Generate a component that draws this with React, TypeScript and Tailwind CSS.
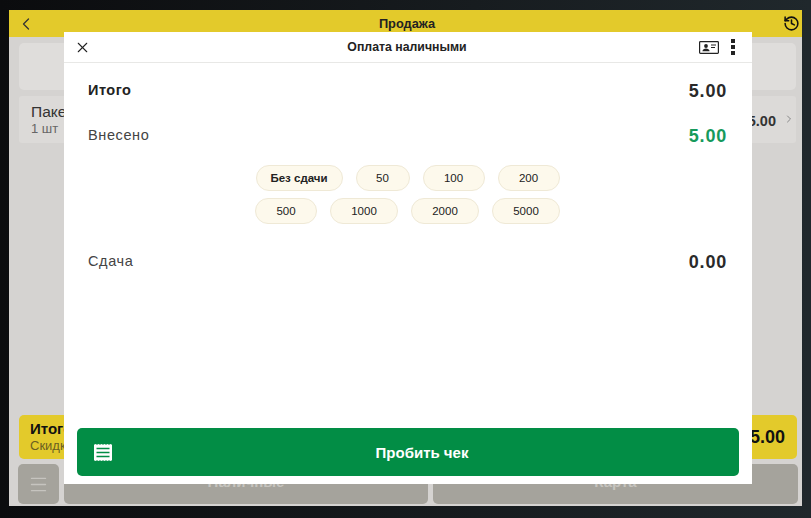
import { ChevronLeft, ChevronRight, History, Menu, X } from "lucide-react";

const row1 = [
  { label: "Без сдачи", w: "w-[87px]", bold: true },
  { label: "50", w: "w-[54px]" },
  { label: "100", w: "w-[62px]" },
  { label: "200", w: "w-[62px]" },
];
const row2 = [
  { label: "500", w: "w-[62px]" },
  { label: "1000", w: "w-[68px]" },
  { label: "2000", w: "w-[68px]" },
  { label: "5000", w: "w-[68px]" },
];

const Chip = ({ label, w, bold }: { label: string; w: string; bold?: boolean }) => (
  <button
    className={`${w} h-[26px] pt-[1px] rounded-full border border-[#efe9d6] bg-[#fdf9ec] text-[11.5px] text-[#222] ${bold ? "font-bold" : ""}`}
  >
    {label}
  </button>
);

const App = () => {
  return (
    <div className="w-[811px] h-[518px] overflow-hidden bg-gradient-to-r from-[#0b0c0e] to-[#20282c] pl-[9px] pr-[9px] pt-[10px] font-['Liberation_Sans',sans-serif]">
      {/* Screen behind the dialog */}
      <div className="relative h-[496px] w-[793px] bg-[#d5d3d1] flex flex-col">
        <div className="h-[27px] shrink-0 bg-[#e3ca2b] flex items-center justify-between pl-[7px] pr-[2px]">
          <ChevronLeft className="w-[20px] h-[20px] text-[#333]" strokeWidth={1.5} />
          <span className="text-[12.8px] font-bold text-[#222] mr-[5px]">Продажа</span>
          <History className="w-[17px] h-[17px] text-[#111]" strokeWidth={2.2} />
        </div>

        <div className="flex-1 flex flex-col pl-[10px] pr-[6px] pt-[6px]">
          <div className="h-[47px] rounded-[5px] bg-[#dfdddb]" />
          <div className="mt-[6px] h-[47px] rounded-[3px] bg-[#dcdad8] flex items-center justify-between pl-[12px] pr-[1px]">
            <div>
              <div className="text-[15.5px] leading-[18px] text-[#333]">Пакет</div>
              <div className="text-[13px] leading-[16px] text-[#666]">1 шт</div>
            </div>
            <div className="flex items-center gap-[7px]">
              <span className="text-[14.5px] font-bold text-[#333] mt-[5px]">5.00</span>
              <ChevronRight className="w-[12px] h-[12px] text-[#888] -mt-[2px]" />
            </div>
          </div>

          <div className="mt-auto h-[44px] w-[778px] rounded-[5px] bg-[#e3ca2b] flex items-center justify-between pl-[11px] pr-[12px]">
            <div>
              <div className="text-[15px] leading-[18px] font-bold text-[#111]">Итого</div>
              <div className="text-[13px] leading-[16px] text-[#6b5f22]">Скидка</div>
            </div>
            <span className="text-[18px] font-bold text-[#111]">5.00</span>
          </div>

          <div className="mt-[5px] mb-[2px] -ml-[1px] h-[40px] w-[781px] shrink-0 flex gap-[5px] text-[15px] font-bold text-[#c6c4bf]">
            <div className="w-[41px] shrink-0 rounded-[5px] bg-[#a5a39c] flex items-center justify-center">
              <Menu className="w-[21px] h-[21px] text-[#c6c4bf]" strokeWidth={1.5} />
            </div>
            <div className="w-[364px] shrink-0 rounded-[5px] bg-[#a5a39c] flex items-end justify-center pb-[11px]">Наличные</div>
            <div className="w-[365px] shrink-0 rounded-[5px] bg-[#a5a39c] flex items-end justify-center pb-[11px]">Карта</div>
          </div>
        </div>

        {/* Cash payment dialog */}
        <div className="absolute left-[55px] top-[22px] w-[688px] h-[452px] bg-white flex flex-col">
          <div className="h-[31px] shrink-0 border-b border-[#e8e8e6] flex items-center justify-between pl-[10px] pr-[17px]">
            <X className="w-[17px] h-[17px] text-[#222]" strokeWidth={1.5} />
            <span className="text-[12.3px] font-bold text-[#222] ml-[24px]">Оплата наличными</span>
            <div className="flex items-center gap-[12px]">
              <svg width="20" height="13" viewBox="0 0 20 13" fill="none" className="text-[#222]">
                <rect x="0.6" y="0.6" width="18.8" height="11.8" rx="0.8" stroke="currentColor" strokeWidth="1.2" />
                <circle cx="7" cy="5" r="1.9" fill="currentColor" />
                <path d="M3.4 10.2c.3-2 1.8-2.8 3.6-2.8s3.3.8 3.6 2.8z" fill="currentColor" />
                <path d="M12 4h5M12 6.5h4" stroke="currentColor" strokeWidth="1" />
              </svg>
              <div className="flex flex-col gap-[2px]">
                <span className="w-[4px] h-[4px] bg-[#222]" />
                <span className="w-[4px] h-[4px] bg-[#222]" />
                <span className="w-[4px] h-[4px] bg-[#222]" />
              </div>
            </div>
          </div>

          <div className="flex-1 flex flex-col pl-[24px] pr-[25px] pt-[16px]">
            <div className="h-[24px] flex items-center justify-between">
              <span className="text-[14.5px] tracking-[0.5px] font-bold text-[#222]">Итого</span>
              <span className="text-[18px] tracking-[0.8px] font-bold text-[#2a2a2a]">5.00</span>
            </div>
            <div className="mt-[21px] h-[24px] flex items-center justify-between">
              <span className="text-[14.5px] tracking-[0.6px] text-[#444]">Внесено</span>
              <span className="text-[18px] tracking-[0.8px] font-bold text-[#169a5c]">5.00</span>
            </div>

            <div className="mt-[17px] flex flex-col items-center gap-[7px]">
              <div className="flex gap-[13px]">
                {row1.map((c) => (
                  <Chip key={c.label} {...c} />
                ))}
              </div>
              <div className="flex gap-[13px]">
                {row2.map((c) => (
                  <Chip key={c.label} {...c} />
                ))}
              </div>
            </div>

            <div className="mt-[26px] h-[24px] flex items-center justify-between">
              <span className="text-[14.5px] tracking-[0.6px] text-[#444]">Сдача</span>
              <span className="text-[18px] tracking-[0.8px] font-bold text-[#2a2a2a]">0.00</span>
            </div>
          </div>

          <div className="px-[13px] pb-[8px]">
            <button className="relative w-full h-[48px] rounded-[5px] bg-[#028d45] flex items-center justify-center pl-[28px] pt-[2px] text-[15px] font-bold text-white">
              <svg width="18" height="17" viewBox="0 0 18 17" className="absolute left-[17px] top-[16px]">
                <path
                  d="M0 .8l1.5-.8 1.5.8 1.5-.8 1.5.8 1.5-.8 1.5.8 1.5-.8 1.5.8 1.5-.8 1.5.8 1.5-.8 1.5.8v15.4l-1.5.8-1.5-.8-1.5.8-1.5-.8-1.5.8-1.5-.8-1.5.8-1.5-.8-1.5.8-1.5-.8-1.5.8-1.5-.8z"
                  fill="#fff"
                />
                <path d="M2.5 4.5h13M2.5 8.5h13M2.5 12.5h13" stroke="#028d45" strokeWidth="1.5" />
              </svg>
              Пробить чек
            </button>
          </div>
        </div>
      </div>
    </div>
  );
};

export default App;
